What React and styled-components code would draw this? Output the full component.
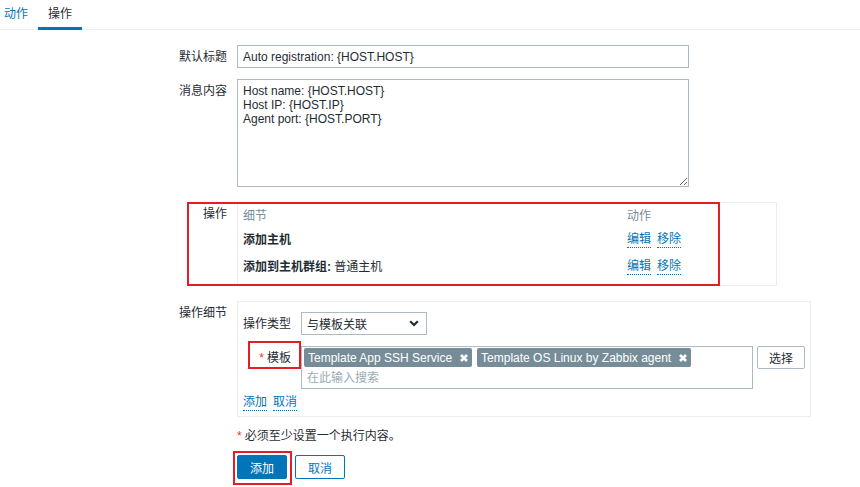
import React from 'react';
import styled, { createGlobalStyle } from 'styled-components';

const GlobalStyle = createGlobalStyle`
  html, body {
    margin: 0;
    background: #fff;
  }
  body {
    font-family: "Liberation Sans", "Noto Sans CJK SC", Arial, sans-serif;
    font-size: 12px;
    color: #1f2c33;
  }
`;

const Page = styled.div`
  width: 860px;
  height: 487px;
  overflow: hidden;
`;

const TabBar = styled.div`
  display: flex;
  height: 29px;
  margin-left: -6px;
  border-bottom: 1px solid #ebeef0;
`;

const Tab = styled.div`
  box-sizing: border-box;
  height: 30px;
  margin-bottom: -1px;
  padding: 0 10px;
  line-height: 29px;
  color: ${p => (p.$active ? '#1f2c33' : '#0275b8')};
  border-bottom: 3px solid ${p => (p.$active ? '#0275b8' : 'transparent')};
`;

const Form = styled.div`
  padding-top: 15px;
`;

const FormRow = styled.div`
  position: relative;
  display: grid;
  grid-template-columns: 227px 1fr;
  column-gap: 10px;
  justify-items: start;
  margin-bottom: ${p => p.$gap || 0}px;
`;

const Label = styled.div`
  justify-self: end;
  padding-top: 3px;
  line-height: 18px;
  white-space: nowrap;
`;

const TextInput = styled.input`
  box-sizing: border-box;
  width: 452px;
  height: 23px;
  padding: 0 5px;
  border: 1px solid #acbbc2;
  border-radius: 0;
  font: inherit;
  color: #1f2c33;
  outline: none;
`;

const TextArea = styled.textarea`
  box-sizing: border-box;
  width: 452px;
  height: 108px;
  padding: 4px 5px;
  border: 1px solid #acbbc2;
  border-radius: 0;
  font: inherit;
  line-height: 14px;
  color: #1f2c33;
  outline: none;
`;

const Highlight = styled.div`
  position: absolute;
  box-sizing: border-box;
  top: ${p => p.$top}px;
  left: ${p => p.$left}px;
  width: ${p => p.$w}px;
  height: ${p => p.$h}px;
  border: 2px solid #e41e26;
  pointer-events: none;
`;

const OpsBox = styled.div`
  box-sizing: border-box;
  width: 540px;
  padding: 4px 5px 0;
  border: 1px solid #ebeef0;
  display: grid;
  grid-template-columns: 384px auto;
  grid-template-rows: 24px 27px 27px;
  line-height: 18px;
`;

const HeadCell = styled.div`
  color: #768d99;
`;

const Cell = styled.div`
  white-space: nowrap;
`;

const Strong = styled.b`
  font-weight: bold;
`;

const LinkGroup = styled.div`
  display: flex;
  align-items: flex-start;
  gap: 6px;
  margin-top: ${p => p.$top || 0}px;
`;

const Link = styled.a`
  display: inline-block;
  line-height: 16px;
  color: #0275b8;
  text-decoration: none;
  border-bottom: 1px dotted #0275b8;
  cursor: pointer;
`;

const DetailsBox = styled.div`
  box-sizing: border-box;
  width: 574px;
  padding: 10px 5px 5px;
  border: 1px solid #ebeef0;
`;

const DetailGrid = styled.div`
  position: relative;
  display: grid;
  grid-template-columns: 48px auto;
  column-gap: 10px;
  row-gap: 11px;
  justify-items: start;
`;

const Required = styled.span`
  color: #e33734;
  margin-right: 3px;
`;

const Select = styled.div`
  box-sizing: border-box;
  width: 126px;
  height: 23px;
  padding: 0 7px 0 5px;
  border: 1px solid #acbbc2;
  display: flex;
  align-items: center;
  justify-content: space-between;
  background: #fff;
`;

const FieldLine = styled.div`
  display: flex;
  align-items: flex-start;
  gap: 4px;
`;

const MultiSelect = styled.div`
  box-sizing: border-box;
  width: 452px;
  height: 43px;
  padding: 1px 2px;
  border: 1px solid #acbbc2;
`;

const TagList = styled.div`
  display: flex;
  gap: 5px;
`;

const Tag = styled.span`
  display: inline-flex;
  align-items: center;
  gap: 8px;
  height: 19px;
  padding: 0 4px;
  background: #768d99;
  color: #fff;
  border-radius: 2px;
  white-space: nowrap;
`;

const Placeholder = styled.div`
  margin-top: 2px;
  padding-left: 3px;
  line-height: 18px;
  color: #9aabb4;
`;

const Button = styled.button`
  box-sizing: border-box;
  height: ${p => p.$h || 24}px;
  padding: 0 ${p => p.$pad || 12}px;
  border: 1px solid ${p => (p.$primary || p.$outline ? '#0275b8' : '#acbbc2')};
  border-radius: 2px;
  background: ${p => (p.$primary ? '#0275b8' : '#fff')};
  color: ${p => (p.$primary ? '#fff' : p.$outline ? '#0275b8' : '#1f2c33')};
  font: inherit;
  cursor: pointer;
`;

const Note = styled.div`
  line-height: 18px;
`;

const ButtonRow = styled.div`
  position: relative;
  display: flex;
  gap: 8px;
`;

const Chevron = () => (
  <svg width="10" height="7" viewBox="0 0 10 7">
    <path d="M1.2 1.2l3.8 3.8 3.8-3.8" fill="none" stroke="#1f2c33" strokeWidth="2.2" />
  </svg>
);

const Cross = () => (
  <svg width="8" height="8" viewBox="0 0 8 8">
    <path d="M1 1l6 6M7 1l-6 6" stroke="#fff" strokeWidth="2.6" />
  </svg>
);

const message = `Host name: {HOST.HOST}
Host IP: {HOST.IP}
Agent port: {HOST.PORT}`;

const operations = [
  { bold: '添加主机', rest: '' },
  { bold: '添加到主机群组: ', rest: '普通主机' },
];

const templates = ['Template App SSH Service', 'Template OS Linux by Zabbix agent'];

export default function App() {
  return (
    <Page>
      <GlobalStyle />
      <TabBar>
        <Tab>动作</Tab>
        <Tab $active>操作</Tab>
      </TabBar>

      <Form>
        <FormRow $gap={11}>
          <Label>默认标题</Label>
          <TextInput defaultValue="Auto registration: {HOST.HOST}" />
        </FormRow>

        <FormRow $gap={15}>
          <Label>消息内容</Label>
          <TextArea defaultValue={message} />
        </FormRow>

        <FormRow $gap={15}>
          <Label>操作</Label>
          <OpsBox>
            <HeadCell>细节</HeadCell>
            <HeadCell>动作</HeadCell>
            {operations.map(op => (
              <React.Fragment key={op.bold}>
                <Cell>
                  <Strong>{op.bold}</Strong>
                  {op.rest}
                </Cell>
                <LinkGroup>
                  <Link>编辑</Link>
                  <Link>移除</Link>
                </LinkGroup>
              </React.Fragment>
            ))}
          </OpsBox>
          <Highlight $top={0} $left={187} $w={533} $h={84} />
        </FormRow>

        <FormRow $gap={10}>
          <Label>操作细节</Label>
          <DetailsBox>
            <DetailGrid>
              <Label>操作类型</Label>
              <Select>
                <span>与模板关联</span>
                <Chevron />
              </Select>

              <Label>
                <Required>*</Required>模板
              </Label>
              <FieldLine>
                <MultiSelect>
                  <TagList>
                    {templates.map(t => (
                      <Tag key={t}>
                        {t}
                        <Cross />
                      </Tag>
                    ))}
                  </TagList>
                  <Placeholder>在此输入搜索</Placeholder>
                </MultiSelect>
                <Button $h={23} $pad={11}>选择</Button>
              </FieldLine>
              <Highlight $top={29} $left={5} $w={53} $h={28} />
            </DetailGrid>
            <LinkGroup $top={5}>
              <Link>添加</Link>
              <Link>取消</Link>
            </LinkGroup>
          </DetailsBox>
        </FormRow>

        <FormRow $gap={10}>
          <div />
          <Note>
            <Required>*</Required>必须至少设置一个执行内容。
          </Note>
        </FormRow>

        <FormRow>
          <div />
          <ButtonRow>
            <Button $primary>添加</Button>
            <Button $outline>取消</Button>
            <Highlight $top={-4} $left={-4} $w={59} $h={34} />
          </ButtonRow>
        </FormRow>
      </Form>
    </Page>
  );
}
